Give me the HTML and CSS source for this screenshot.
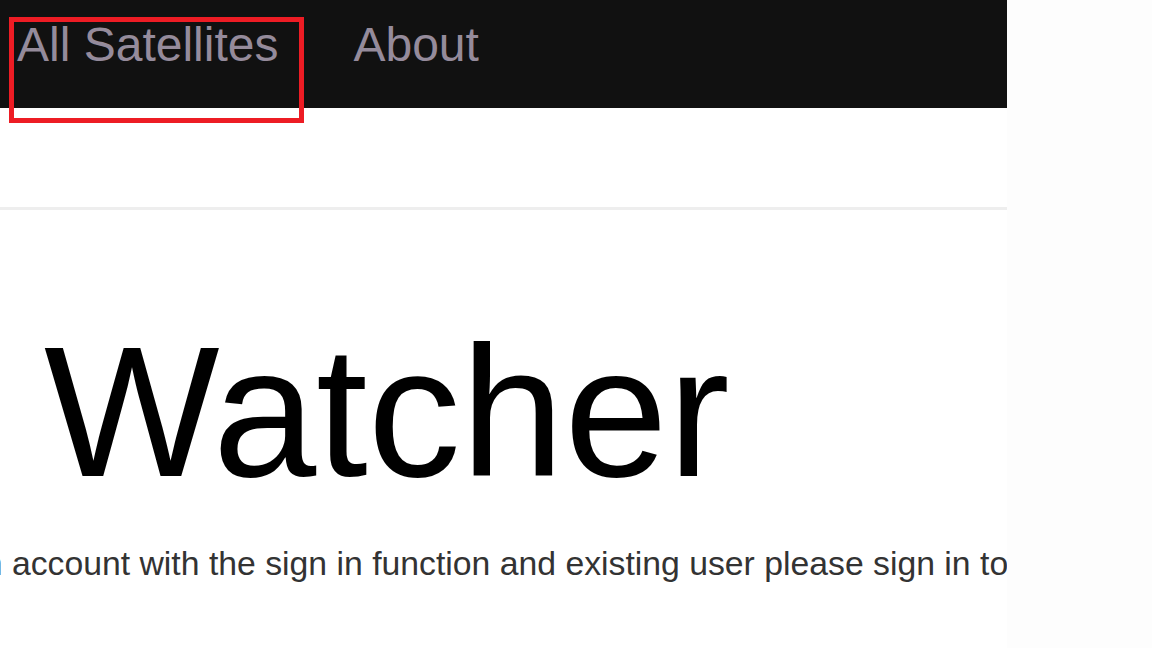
FILE: index.html
```html
<!DOCTYPE html>
<html lang="en">
<head>
<meta charset="utf-8">
<title>Satellite Watcher</title>
<link rel="stylesheet" href="styles.css">
</head>
<body>
<div class="page">
  <nav class="navbar">
    <a class="nav-link" href="#">All Satellites</a>
    <a class="nav-link" href="#">About</a>
  </nav>
  <hr class="divider">
  <h1 class="title">Watcher</h1>
  <p class="lead">an account with the sign in function and existing user please sign in to</p>
  <div class="highlight"></div>
</div>
</body>
</html>
```
FILE: styles.css
```css
html {
  background: #fdfdfd;
}
body {
  margin: 0;
  font-family: "Liberation Sans", Arial, sans-serif;
}
.page {
  position: relative;
  width: 1007px;
  height: 648px;
  overflow: hidden;
  background: #fff;
}
.navbar {
  display: flex;
  gap: 75px;
  height: 108px;
  box-sizing: border-box;
  padding: 18px 0 0 17px;
  background: #111111;
}
.nav-link {
  font-size: 48px;
  line-height: 53px;
  color: #958b9b;
  text-decoration: none;
}
.divider {
  margin: 99px 0 0 0;
  border: 0;
  height: 3px;
  background: #eeeeee;
}
.title {
  margin: 109px 0 0 0;
  padding-left: 44px;
  font-size: 186px;
  line-height: 1;
  font-weight: normal;
  color: #000;
}
.lead {
  margin: 42px 0 0 -35px;
  font-size: 33.75px;
  line-height: 1;
  white-space: nowrap;
  color: #333;
}
.highlight {
  position: absolute;
  left: 9px;
  top: 17px;
  width: 295px;
  height: 106px;
  box-sizing: border-box;
  border: 5px solid #ed1c24;
}
```
